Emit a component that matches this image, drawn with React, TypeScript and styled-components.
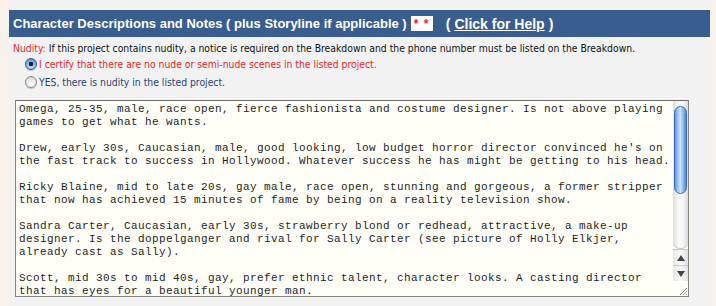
import React from "react";
import styled, { createGlobalStyle } from "styled-components";

const GlobalStyle = createGlobalStyle`
  html, body {
    margin: 0;
    padding: 0;
    background: #f9f2ec;
  }
`;

const Page = styled.div`
  width: 716px;
  height: 306px;
  padding-left: 9px;
  box-sizing: border-box;
`;

const Panel = styled.div`
  width: 701px;
  height: 306px;
  background: #f2f2f2;
  padding-top: 10px;
  box-sizing: border-box;
`;

const HeaderBar = styled.div`
  height: 27px;
  background: #3a5d8f;
  display: flex;
  align-items: center;
  padding-left: 4px;
  font-family: "Liberation Sans", Arial, sans-serif;
  font-weight: bold;
  font-size: 13px;
  color: #fff;
  white-space: nowrap;
`;

const Required = styled.span`
  display: inline-flex;
  align-items: center;
  justify-content: center;
  background: #fff;
  color: #e8232a;
  width: 22px;
  height: 15px;
  margin-left: 4px;
  font-size: 12px;
  letter-spacing: 1px;
`;

const HelpGroup = styled.span`
  margin-left: 13px;
  font-size: 14px;
`;

const HelpLink = styled.a`
  color: #fff;
  text-decoration: underline;
  margin: 0 4px;
  cursor: pointer;
`;

const Notice = styled.div`
  font-family: "DejaVu Sans Condensed", "DejaVu Sans", sans-serif;
  font-size: 10.3px;
  color: #111;
  padding: 4px 0 0 4px;
  line-height: 14px;
`;

const NoticeLabel = styled.span`
  color: #e5272d;
`;

const Options = styled.div`
  display: flex;
  flex-direction: column;
  gap: 4px;
  padding: 2px 0 0 16px;
`;

const Option = styled.label<{ $tone: "red" | "blue" }>`
  display: flex;
  align-items: center;
  gap: 2px;
  font-family: "DejaVu Sans Condensed", "DejaVu Sans", sans-serif;
  font-size: 10.3px;
  height: 14px;
  color: ${(p) => (p.$tone === "red" ? "#e5272d" : "#2b3f78")};
`;

const Radio = styled.span<{ $checked?: boolean }>`
  width: 12px;
  height: 12px;
  border-radius: 50%;
  box-sizing: border-box;
  border: 1px solid ${(p) => (p.$checked ? "#3a5b8a" : "#8a8a8a")};
  background: ${(p) =>
    p.$checked
      ? "radial-gradient(circle at 50% 50%, #1a1a2a 0 2px, transparent 2.6px), radial-gradient(circle at 50% 70%, #cde6ff 0%, #7fb0e6 55%, #3f7cc4 100%)"
      : "radial-gradient(circle at 50% 70%, #ffffff 0%, #e4e4e4 60%, #b8b8b8 100%)"};
  box-shadow: 0 1px 1px rgba(0, 0, 0, 0.2);
  flex-shrink: 0;
`;

const Field = styled.div`
  margin: 11px 0 0 6px;
  width: 674px;
  height: 197px;
  box-sizing: border-box;
  border: 1px solid #86857e;
  border-top-color: #6f6e68;
  display: flex;
  background: #fffff8;
`;

const Notes = styled.textarea`
  flex: 1;
  min-width: 0;
  border: none;
  outline: none;
  resize: none;
  overflow: hidden;
  background: transparent;
  font-family: "Liberation Mono", "Courier New", monospace;
  font-size: 11px;
  letter-spacing: 0.4px;
  line-height: 13px;
  color: #1e1e1e;
  padding: 2px 0 0 3px;
  margin: 0;
  white-space: pre;
`;

const ScrollBar = styled.div`
  width: 15px;
  flex-shrink: 0;
  display: flex;
  flex-direction: column;
  background: #fffff8;
`;

const Track = styled.div`
  flex: 1;
  padding: 5px 1px 0 1px;
  border-radius: 0 0 7px 7px;
  background: linear-gradient(90deg, #dedede, #fbfbfb 40%, #f4f4f4 70%, #dadada);
  box-shadow: inset 0 -1px 0 #c4c4c4;
`;

const Thumb = styled.div`
  height: 86px;
  border-radius: 7px;
  border: 1px solid #3d6fb8;
  background: linear-gradient(90deg, #5f95dc 0%, #a9cdf7 30%, #c9e1fb 50%, #8ab8ef 75%, #4e86d3 100%);
`;

const Arrow = styled.div`
  height: 15px;
  display: flex;
  align-items: center;
  justify-content: center;
  border-top: 1px solid #c8c8c8;
  background: linear-gradient(90deg, #e6e6e6, #fafafa 50%, #e0e0e0);
`;

const Grip = styled.div`
  height: 15px;
  background: #fffff8;
  display: flex;
  justify-content: flex-end;
  align-items: flex-end;
`;

const notes = [
  "Omega, 25-35, male, race open, fierce fashionista and costume designer. Is not above playing",
  "games to get what he wants.",
  "",
  "Drew, early 30s, Caucasian, male, good looking, low budget horror director convinced he's on",
  "the fast track to success in Hollywood. Whatever success he has might be getting to his head.",
  "",
  "Ricky Blaine, mid to late 20s, gay male, race open, stunning and gorgeous, a former stripper",
  "that now has achieved 15 minutes of fame by being on a reality television show.",
  "",
  "Sandra Carter, Caucasian, early 30s, strawberry blond or redhead, attractive, a make-up",
  "designer. Is the doppelganger and rival for Sally Carter (see picture of Holly Elkjer,",
  "already cast as Sally).",
  "",
  "Scott, mid 30s to mid 40s, gay, prefer ethnic talent, character looks. A casting director",
  "that has eyes for a beautiful younger man.",
].join("\n");

export default function App() {
  return (
    <>
      <GlobalStyle />
      <Page>
        <Panel>
          <HeaderBar>
            Character Descriptions and Notes ( plus Storyline if applicable )
            <Required>* *</Required>
            <HelpGroup>
              (<HelpLink>Click for Help</HelpLink>)
            </HelpGroup>
          </HeaderBar>
          <Notice>
            <NoticeLabel>Nudity:</NoticeLabel> If this project contains nudity, a notice is
            required on the Breakdown and the phone number must be listed on the Breakdown.
          </Notice>
          <Options>
            <Option $tone="red">
              <Radio $checked />I certify that there are no nude or semi-nude scenes in the
              listed project.
            </Option>
            <Option $tone="blue">
              <Radio />YES, there is nudity in the listed project.
            </Option>
          </Options>
          <Field>
            <Notes defaultValue={notes} spellCheck={false} wrap="off" />
            <ScrollBar>
              <Track>
                <Thumb />
              </Track>
              <Arrow>
                <svg width="8" height="6" viewBox="0 0 8 6">
                  <path d="M4 0 L8 6 L0 6 Z" fill="#444" />
                </svg>
              </Arrow>
              <Arrow>
                <svg width="8" height="6" viewBox="0 0 8 6">
                  <path d="M0 0 L8 0 L4 6 Z" fill="#444" />
                </svg>
              </Arrow>
              <Grip>
                <svg width="10" height="10" viewBox="0 0 10 10">
                  <path d="M9 2 L2 9 M9 5 L5 9 M9 8 L8 9" stroke="#888" strokeWidth="1" />
                </svg>
              </Grip>
            </ScrollBar>
          </Field>
        </Panel>
      </Page>
    </>
  );
}
